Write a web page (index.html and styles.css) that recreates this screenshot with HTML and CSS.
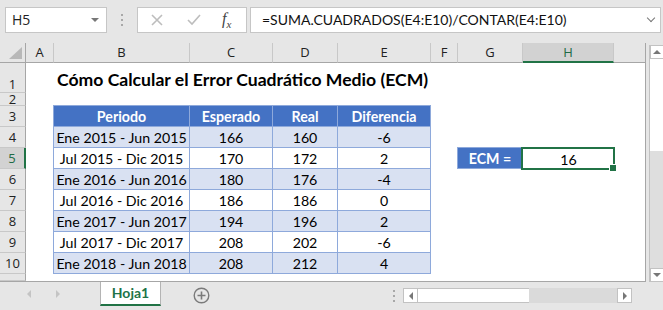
FILE: index.html
```html
<html lang="es">
<head>
    <meta charset="UTF-8">
    <title>Hoja1 - ECM</title>
    <link rel="stylesheet" href="styles.css">
</head>
<body>
    <div class="topbar">
        <div class="namebox">H5<span class="drop"></span></div>
        <div class="grip"><i></i><i></i><i></i></div>
        <div class="fxbox">
            <svg class="ico" width="14" height="14" viewBox="0 0 14 14"><path d="M2 2 L12 12 M12 2 L2 12" stroke="#bdbdbd" stroke-width="1.6" fill="none"/></svg>
            <svg class="ico" width="16" height="14" viewBox="0 0 16 14"><path d="M2 7 L6 11 L14 2" stroke="#bdbdbd" stroke-width="1.6" fill="none"/></svg>
            <span class="fx">f<sub>x</sub></span>
        </div>
        <div class="formula">=SUMA.CUADRADOS(E4:E10)/CONTAR(E4:E10)<span class="chev"></span></div>
    </div>

    <div class="main">
        <div class="sheet">
            <div class="corner"><span class="tri"></span></div>
            <div class="colhead">A</div>
            <div class="colhead">B</div>
            <div class="colhead">C</div>
            <div class="colhead">D</div>
            <div class="colhead">E</div>
            <div class="colhead">F</div>
            <div class="colhead">G</div>
            <div class="colhead sel">H</div>
            <div class="colhead">I</div>

            <!-- row 1 -->
            <div class="rowhead tall">1</div>
            <div></div>
            <div class="title">Cómo Calcular el Error Cuadrático Medio (ECM)</div>
            <div></div><div></div><div></div><div></div>

            <!-- row 2 -->
            <div class="rowhead short"><span>2</span></div>
            <div></div><div></div><div></div><div></div><div></div><div></div><div></div><div></div><div></div>

            <!-- row 3 -->
            <div class="rowhead">3</div>
            <div></div>
            <div class="th first">Periodo</div>
            <div class="th">Esperado</div>
            <div class="th">Real</div>
            <div class="th">Diferencia</div>
            <div></div><div></div><div></div><div></div>

            <!-- row 4 -->
            <div class="rowhead">4</div>
            <div></div>
            <div class="td first band">Ene 2015 - Jun 2015</div>
            <div class="td band">166</div>
            <div class="td band">160</div>
            <div class="td band">-6</div>
            <div></div><div></div><div></div><div></div>

            <!-- row 5 -->
            <div class="rowhead sel">5</div>
            <div></div>
            <div class="td first">Jul 2015 - Dic 2015</div>
            <div class="td">170</div>
            <div class="td">172</div>
            <div class="td">2</div>
            <div></div>
            <div class="label">ECM =</div>
            <div class="result">16</div>
            <div></div>

            <!-- row 6 -->
            <div class="rowhead">6</div>
            <div></div>
            <div class="td first band">Ene 2016 - Jun 2016</div>
            <div class="td band">180</div>
            <div class="td band">176</div>
            <div class="td band">-4</div>
            <div></div><div></div><div></div><div></div>

            <!-- row 7 -->
            <div class="rowhead">7</div>
            <div></div>
            <div class="td first">Jul 2016 - Dic 2016</div>
            <div class="td">186</div>
            <div class="td">186</div>
            <div class="td">0</div>
            <div></div><div></div><div></div><div></div>

            <!-- row 8 -->
            <div class="rowhead">8</div>
            <div></div>
            <div class="td first band">Ene 2017 - Jun 2017</div>
            <div class="td band">194</div>
            <div class="td band">196</div>
            <div class="td band">2</div>
            <div></div><div></div><div></div><div></div>

            <!-- row 9 -->
            <div class="rowhead">9</div>
            <div></div>
            <div class="td first">Jul 2017 - Dic 2017</div>
            <div class="td">208</div>
            <div class="td">202</div>
            <div class="td">-6</div>
            <div></div><div></div><div></div><div></div>

            <!-- row 10 -->
            <div class="rowhead">10</div>
            <div></div>
            <div class="td first band">Ene 2018 - Jun 2018</div>
            <div class="td band">208</div>
            <div class="td band">212</div>
            <div class="td band">4</div>
            <div></div><div></div><div></div><div></div>

            <!-- row 11 (cut off) -->
            <div class="rowhead"></div>
        </div>

        <div class="vscroll">
            <div class="sbtn"><span class="up"></span></div>
            <div class="vthumb"></div>
            <div class="vtrack"></div>
            <div class="sbtn"><span class="down"></span></div>
        </div>
    </div>

    <div class="tabbar">
        <div class="navs">
            <span class="left"></span>
            <span class="right"></span>
        </div>
        <div class="tab">Hoja1</div>
        <svg class="add" width="17" height="17" viewBox="0 0 17 17">
            <circle cx="8.5" cy="8.5" r="7.3" stroke="#7a7a7a" stroke-width="1.4" fill="none"/>
            <path d="M8.5 4.5 V12.5 M4.5 8.5 H12.5" stroke="#7a7a7a" stroke-width="1.6"/>
        </svg>
        <div class="grip tabgrip"><i></i><i></i><i></i></div>
        <div class="hscroll">
            <div class="sbtn"><span class="left"></span></div>
            <div class="hthumb"></div>
            <div class="htrack"></div>
            <div class="sbtn"><span class="right"></span></div>
        </div>
    </div>
</body>
</html>
```

FILE: styles.css
```css
* {
  box-sizing: border-box;
}

body {
  margin: 0;
  width: 663px;
  height: 310px;
  overflow: hidden;
  background-color: #e6e6e6;
  font-family: "Open Sans", "Noto Sans", sans-serif;
  color: #000;
}

/* Formula bar */
.topbar {
  height: 43px;
  display: flex;
  align-items: flex-start;
  padding: 7px 0 0 5px;
}

.namebox {
  position: relative;
  width: 102px;
  height: 26px;
  background: #fff;
  border: 1px solid #c6c6c6;
  font-size: 14px;
  line-height: 23px;
  padding-left: 6px;
  color: #222;
}

.drop {
  position: absolute;
  right: 7px;
  top: 10px;
  border-left: 4px solid transparent;
  border-right: 4px solid transparent;
  border-top: 4px solid #777;
}

.grip {
  width: 30px;
  height: 26px;
  display: flex;
  flex-direction: column;
  align-items: center;
  justify-content: center;
  gap: 3px;
}

.grip i {
  display: block;
  width: 2px;
  height: 2px;
  background: #a8a8a8;
}

.fxbox {
  width: 110px;
  height: 26px;
  background: #fff;
  border: 1px solid #c6c6c6;
  display: flex;
  align-items: center;
  padding-left: 12px;
  gap: 22px;
}

.fx {
  font-family: "Liberation Serif", serif;
  font-style: italic;
  font-size: 16px;
  color: #444;
  margin-left: -2px;
}

.fx sub {
  font-size: 11px;
}

.formula {
  position: relative;
  margin-left: 3px;
  width: 411px;
  height: 26px;
  background: #fff;
  border: 1px solid #c6c6c6;
  font-family: "Lato", sans-serif;
  font-size: 14px;
  line-height: 23px;
  padding-left: 11px;
  color: #111;
}

.chev {
  position: absolute;
  right: 6px;
  top: 7px;
  width: 6px;
  height: 6px;
  border-right: 1.5px solid #777;
  border-bottom: 1.5px solid #777;
  transform: rotate(45deg);
}

/* Sheet grid */
.main {
  display: flex;
  height: 239px;
}

.sheet {
  width: 646px;
  height: 239px;
  overflow: hidden;
  background: #fff;
  border-right: 1px solid #a6a6a6;
  border-bottom: 1px solid #a6a6a6;
  display: grid;
  grid-template-columns: 26px 28px 136px 83px 65px 93px 27px 65px 91px 72px;
  grid-template-rows: 20px 30px 13px repeat(8, 21px) 7px;
}

.corner {
  position: relative;
  background: #e6e6e6;
  border-right: 1px solid #a6a6a6;
  border-bottom: 1px solid #a6a6a6;
}

.tri {
  position: absolute;
  right: 3px;
  bottom: 3px;
  border-left: 13px solid transparent;
  border-bottom: 12px solid #b8b8b8;
}

.colhead {
  background: #e6e6e6;
  border-right: 1px solid #c8c8c8;
  border-bottom: 1px solid #a6a6a6;
  font-size: 13px;
  text-align: center;
  line-height: 19px;
  color: #222;
}

.colhead.sel {
  background: #d2d2d2;
  border-bottom: 2px solid #217346;
  color: #1e6b45;
}

.rowhead {
  background: #e6e6e6;
  border-right: 1px solid #a6a6a6;
  border-bottom: 1px solid #c8c8c8;
  font-size: 13px;
  line-height: 15px;
  color: #222;
  display: flex;
  align-items: flex-end;
  justify-content: center;
  padding-bottom: 2px;
  overflow: hidden;
}

.rowhead.tall {
  padding-bottom: 0;
}

.rowhead.short {
  padding-bottom: 0;
  line-height: 11px;
}

.rowhead.sel {
  background: #d2d2d2;
  border-right: 2px solid #217346;
  color: #1e6b45;
}

.title {
  grid-column: span 4;
  font-family: "Lato", sans-serif;
  font-weight: bold;
  font-size: 17.6px;
  white-space: nowrap;
  padding: 0 0 3px 3px;
  display: flex;
  align-items: flex-end;
}

/* Data table */
.th,
.td,
.label,
.result {
  font-family: "Lato", sans-serif;
  font-size: 14.2px;
  display: flex;
  align-items: flex-end;
  justify-content: center;
  padding-bottom: 1px;
  white-space: nowrap;
  border-right: 1px solid #8ea9db;
  border-bottom: 1px solid #8ea9db;
}

.th {
  background: #4472c4;
  color: #fff;
  font-weight: bold;
  box-shadow: 0 -1px 0 #8ea9db;
}

.th.first {
  box-shadow: 0 -1px 0 #8ea9db, -1px 0 0 #8ea9db, -1px -1px 0 #8ea9db;
}

.td.first {
  box-shadow: -1px 0 0 #8ea9db;
}

.band {
  background: #d9e1f2;
}

.label {
  background: #4472c4;
  color: #fff;
  font-weight: bold;
  box-shadow: 0 -1px 0 #8ea9db, -1px 0 0 #8ea9db, -1px -1px 0 #8ea9db;
}

.result {
  position: relative;
  border: none;
  background: #fff;
}

.result::before {
  content: "";
  position: absolute;
  left: -2px;
  top: -1px;
  right: -1px;
  bottom: -1px;
  border: 2px solid #217346;
}

.result::after {
  content: "";
  position: absolute;
  right: -3px;
  bottom: -3px;
  width: 6px;
  height: 6px;
  background: #217346;
  border: 1px solid #fff;
}

/* Scroll bars */
.vscroll {
  margin: 2px 0 0 3px;
  width: 14px;
  height: 237px;
  display: flex;
  flex-direction: column;
  border-left: 1px solid #c2c2c2;
}

.sbtn {
  position: relative;
  width: 14px;
  height: 14px;
  background: #fff;
  border: 1px solid #c2c2c2;
  display: flex;
  align-items: center;
  justify-content: center;
}

.vthumb {
  height: 92px;
  background: #fff;
}

.vtrack {
  flex: 1;
  background: #dedede;
}

.up {
  border-left: 4px solid transparent;
  border-right: 4px solid transparent;
  border-bottom: 4px solid #777;
}

.down {
  border-left: 4px solid transparent;
  border-right: 4px solid transparent;
  border-top: 4px solid #777;
}

.left {
  border-top: 4px solid transparent;
  border-bottom: 4px solid transparent;
  border-right: 4px solid #777;
}

.right {
  border-top: 4px solid transparent;
  border-bottom: 4px solid transparent;
  border-left: 4px solid #777;
}

/* Sheet tabs */
.tabbar {
  height: 28px;
  display: flex;
  align-items: flex-start;
}

.navs {
  width: 100px;
  height: 24px;
  display: flex;
  align-items: center;
  padding-left: 27px;
  gap: 25px;
}

.navs .left,
.navs .right {
  border-right-color: #c4c4c4;
  border-left-color: #c4c4c4;
}

.tab {
  width: 61px;
  height: 24px;
  background: #fff;
  border-left: 1px solid #b4b4b4;
  border-right: 1px solid #b4b4b4;
  border-bottom: 2px solid #217346;
  font-family: "Lato", sans-serif;
  font-weight: bold;
  font-size: 14px;
  color: #217346;
  text-align: center;
  line-height: 22px;
}

.add {
  margin: 5px 0 0 32px;
}

.tabgrip {
  margin-left: 177px;
  width: 14px;
  height: 28px;
}

.hscroll {
  margin: 6px 0 0 2px;
  width: 229px;
  height: 15px;
  display: flex;
}

.hscroll .sbtn {
  height: 15px;
  width: 15px;
}

.hthumb {
  width: 111px;
  background: #fff;
  border-top: 1px solid #c2c2c2;
  border-bottom: 1px solid #c2c2c2;
}

.htrack {
  flex: 1;
  background: #dadada;
}
```
